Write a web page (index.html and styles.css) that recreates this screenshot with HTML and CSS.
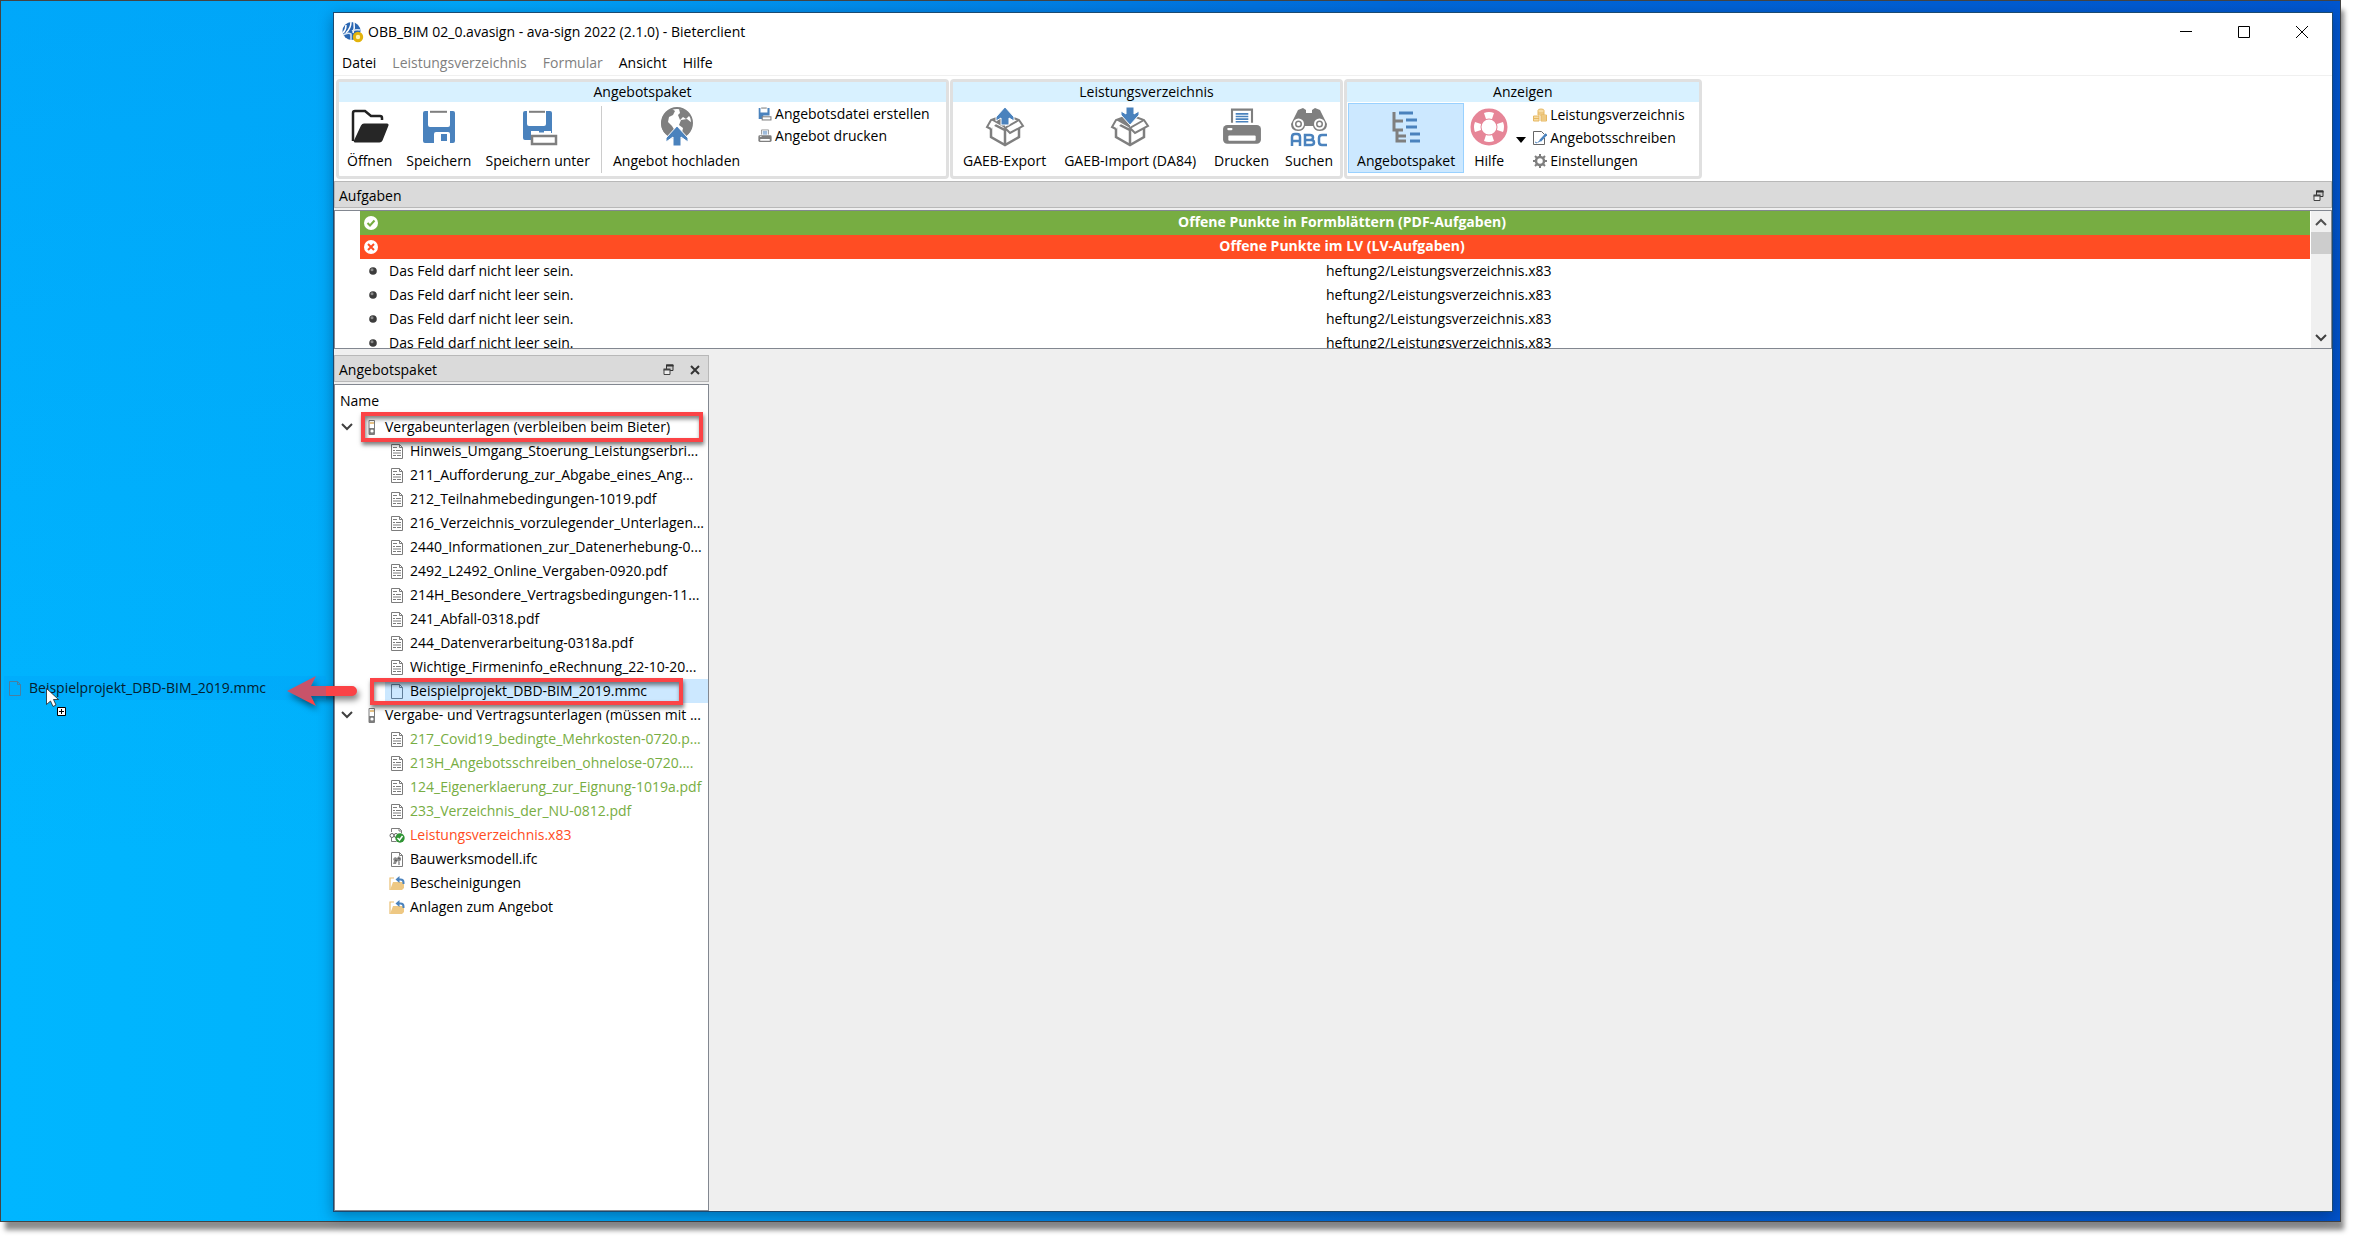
FILE: index.html
```html
<!DOCTYPE html>
<html lang="de">
<head>
<meta charset="utf-8">
<title>OBB_BIM 02_0.avasign - ava-sign 2022 (2.1.0) - Bieterclient</title>
<link rel="stylesheet" href="styles.css">
</head>
<body>
<svg class="sprite" aria-hidden="true">
  <symbol id="i-doc" viewBox="0 0 14 15"><path d="M1.500 .5h8l3 3v11h-11z" fill="#fff" stroke="#7c7c7c"/><path d="M9.500 .5v3h3" fill="none" stroke="#7c7c7c"/><path d="M3 3.500h4M3 6.500h2M6 6.500h5M3 9h8M3 11.500h3M7 11.500h4" stroke="#7c7c7c"/></symbol>
  <symbol id="i-blank" viewBox="0 0 14 15"><path d="M1.500 .5h8l3 3v11h-11z" fill="none" stroke="currentColor"/><path d="M9.500 .5v3h3" fill="none" stroke="currentColor"/></symbol>
  <symbol id="i-binder" viewBox="0 0 8 15"><path d="M1 .5h5.500v14h-5.500z" fill="#fff" stroke="#7c7c7c"/><path d="M2 3h4" stroke="#e3b25f" stroke-width="1.500"/><path d="M1 8h6v6H1z" fill="#7c7c7c"/><circle cx="4" cy="11" r="1.600" fill="#fff"/></symbol>
  <symbol id="i-lv" viewBox="0 0 16 16"><path d="M2.500 5V1.500h8l2 2V6M2.500 11v3.500h5" fill="none" stroke="#7c7c7c"/><path d="M10 1v3h3" fill="none" stroke="#7c7c7c"/><circle cx="3" cy="8.500" r="2" fill="none" stroke="#666"/><circle cx="7" cy="8.500" r="2" fill="none" stroke="#666"/><circle cx="11" cy="11" r="4.700" fill="#2f9434"/><path d="M8.500 11l2 2 3-4" fill="none" stroke="#fff" stroke-width="1.500"/></symbol>
  <symbol id="i-ifc" viewBox="0 0 14 15"><path d="M1.500 .5h8l3 3v11h-11z" fill="#fff" stroke="#7c7c7c"/><path d="M9.500 .5v3h3" fill="none" stroke="#7c7c7c"/><path d="M3 7l2-2 2 1 2-2 2 2v2l-2 2-2-1-1 3H3l1-3z" fill="#8c8c8c"/><path d="M5 8l2 1M8 6l2 1M9 10v3" stroke="#555"/></symbol>
  <symbol id="i-folderup" viewBox="0 0 16 15"><path d="M1 14V2h4" fill="none" stroke="#e9be72" stroke-width="1.200"/><path d="M1 14l3-8h11v6l-2 2z" fill="#eec883"/><path d="M8 3.500h3.500q3 0 3 3V8" fill="none" stroke="#4a82bd" stroke-width="2"/><path d="M10.500 0v7L6.500 3.500z" fill="#4a82bd"/></symbol>
  <symbol id="i-float" viewBox="0 0 11 12"><path d="M3.500 1h6.500v5.500h-6.500z" fill="#ccc" stroke="#333"/><path d="M3 1.500h7.500" stroke="#333" stroke-width="2"/><path d="M1 5.500h6v5H1z" fill="#eee" stroke="#444"/><path d="M.5 5.500H7.500" stroke="#444" stroke-width="2"/></symbol>
  <symbol id="i-close" viewBox="0 0 10 10"><path d="M1 1l8 8M9 1L1 9" stroke="#333" stroke-width="2"/></symbol>
  <symbol id="i-down" viewBox="0 0 12 8"><path d="M1 1l5 5 5-5" fill="none" stroke="#404040" stroke-width="2"/></symbol>
  <symbol id="i-up" viewBox="0 0 12 8"><path d="M1 7l5-5 5 5" fill="none" stroke="#505050" stroke-width="2"/></symbol>
  <symbol id="i-bullet" viewBox="0 0 8 8"><circle cx="4" cy="4" r="3.800" fill="#3c3c3c"/><circle cx="3" cy="2.800" r="1.500" fill="#8a8a8a"/></symbol>
  <symbol id="i-printer" viewBox="0 0 38 38"><path d="M9.500 15V2.500h19V15" fill="#fff" stroke="#7f7f7f" stroke-width="2"/><path d="M13 6.500h12M13 9h12M13 11.500h12M13 14h12" stroke="#4a82bd" stroke-width="1.500"/><rect x="1" y="17" width="36" height="18" rx="4" fill="#7f7f7f"/><rect x="5" y="20" width="5" height="2" rx="1" fill="#fff"/><rect x="6" y="27" width="26" height="5" rx="1" fill="#fff"/></symbol>
</svg>

<main class="desktop">
  <section class="window">
    <header class="titlebar">
      <svg width="22" height="22" viewBox="0 0 22 22"><circle cx="9.500" cy="10" r="9" fill="#2a66b2"/><path d="M9 1Q9 7 4 12M4 4q0 5-3 8M12 1q1 6-1 11" fill="none" stroke="#fff" stroke-width="1.500"/><path d="M1 14q5-3 8-1v6M10 10q4-2 8-1" fill="none" stroke="#d5e4f5" stroke-width="1.500"/><circle cx="16" cy="16" r="3.700" fill="#fff2b0" stroke="#e3b30c" stroke-width="3"/></svg>
      <h1>OBB_BIM 02_0.avasign - ava-sign 2022 (2.1.0) - Bieterclient</h1>
      <div class="winbtns">
        <button aria-label="Minimieren"><svg width="12" height="12"><path d="M0 5.500h12" stroke="#000"/></svg></button>
        <button aria-label="Maximieren"><svg width="12" height="12"><path d="M.5 .5h11v11H.5z" fill="none" stroke="#000"/></svg></button>
        <button aria-label="Schließen"><svg width="12" height="12"><path d="M0 0l12 12M12 0L0 12" stroke="#000"/></svg></button>
      </div>
    </header>
    <nav class="menubar">
      <button>Datei</button><button disabled>Leistungsverzeichnis</button><button disabled>Formular</button><button>Ansicht</button><button>Hilfe</button>
    </nav>

    <div class="toolbar">
      <section class="group group-package">
        <h2>Angebotspaket</h2>
        <div class="tools">
          <button class="tool"><svg width="40" height="40" viewBox="0 0 40 40"><path d="M3 34V6q0-2 2-2h10l6 5h9q2 0 2 2v2" fill="none" stroke="#222" stroke-width="2.500"/><path d="M6 35.500q-3 0-2-2l7-15q1-2 3-2h23q2 0 1.500 2l-6 15q-1 2-3 2z" fill="#262626"/></svg>Öffnen</button>
          <button class="tool"><svg width="40" height="40" viewBox="0 0 40 40"><path d="M4 6q0-2 2-2h3v14q0 2 2 2h18q2 0 2-2V4h3q2 0 2 2v28q0 2-2 2h-3V27q0-2-2-2H17q-2 0-2 2v9H6q-2 0-2-2z" fill="#4a82bd"/><path d="M11 4.800h17" stroke="#7f7f7f" stroke-width="2"/><path d="M22 27h6v7h-6z" fill="#4a82bd"/></svg>Speichern</button>
          <button class="tool"><svg width="40" height="40" viewBox="0 0 40 40"><path d="M5 6q0-2 2-2h2v13q0 2 2 2h15q2 0 2-2V4h4q2 0 2 2v20H17v-2h-4v9H7q-2 0-2-2z" fill="#4a82bd"/><path d="M11 4.800h16" stroke="#7f7f7f" stroke-width="2"/><path d="M13 24h20v3H13z" fill="#fff"/><path d="M21 24.500h5" stroke="#4a82bd" stroke-width="2"/><rect x="14" y="29" width="24" height="8" fill="#fff" stroke="#7f7f7f" stroke-width="2.500"/></svg>Speichern unter</button>
          <span class="sep"></span>
          <button class="tool"><svg width="40" height="40" viewBox="0 0 40 40"><circle cx="20" cy="16" r="15" fill="#fff" stroke="#7f7f7f" stroke-width="2"/><path d="M6 9q4-6 9-7l3 2-2 4-4 2-1 5 4 4 3 5-2 7Q4 27 4 16zM22 2q7 0 11 6l-4 4-3-2-3 3-2-5 2-2zM24 13l6-1 5 4q0 9-7 14l-3-4 1-5-4-3z" fill="#7f7f7f"/><path d="M20 19l11 12v4l-7-5v9h-8v-9l-7 5v-4z" fill="#4a82bd" stroke="#fff"/></svg>Angebot hochladen</button>
          <div class="smalls">
            <button class="small"><svg width="14" height="14" viewBox="0 0 40 40"><path d="M2 3h5v13h20V3h6v21H15v10H2z" fill="#4a82bd"/><path d="M9 3h16" stroke="#7f7f7f" stroke-width="3"/><rect x="12" y="28" width="25" height="9" fill="#fff" stroke="#7f7f7f" stroke-width="3"/></svg>Angebotsdatei erstellen</button>
            <button class="small"><svg width="14" height="14"><use href="#i-printer"/></svg>Angebot drucken</button>
          </div>
        </div>
      </section>

      <section class="group group-lv">
        <h2>Leistungsverzeichnis</h2>
        <div class="tools">
          <button class="tool"><svg width="40" height="40" viewBox="0 0 40 40"><path d="M6 16l14 7 14-7v14l-14 8-14-8zM20 23v15" fill="#fff" stroke="#7f7f7f" stroke-width="2.500"/><path d="M20 8L6 13l-4 7 4 2M20 8l14 5 4 6-13 7-5-5 14-8" fill="#fff" stroke="#7f7f7f" stroke-width="2"/><path d="M6 13l14-5v13z" fill="#7f7f7f"/><path d="M20 0l9 10v4l-5-3v7h-8v-7l-5 3v-4z" fill="#4a82bd" stroke="#fff"/></svg>GAEB-Export</button>
          <button class="tool"><svg width="40" height="40" viewBox="0 0 40 40"><path d="M6 16l14 7 14-7v14l-14 8-14-8zM20 23v15" fill="#fff" stroke="#7f7f7f" stroke-width="2.500"/><path d="M20 8L6 13l-4 7 4 2M20 8l14 5 4 6-13 7-5-5 14-8" fill="#fff" stroke="#7f7f7f" stroke-width="2"/><path d="M6 13l14-5v13z" fill="#7f7f7f"/><path d="M20 18l9-10V4l-5 3V0h-8v7l-5-3v4z" fill="#4a82bd" stroke="#fff"/></svg>GAEB-Import (DA84)</button>
          <button class="tool"><svg width="40" height="40"><use href="#i-printer"/></svg>Drucken</button>
          <button class="tool"><svg width="40" height="40" viewBox="0 0 40 40"><path d="M9 3l5-2 3 2v3h6V3l3-2 5 2 7 14q0 7-7 7-6 0-7-5h-8q-1 5-7 5-7 0-7-7z" fill="#7f7f7f"/><circle cx="9.500" cy="17" r="4.500" fill="none" stroke="#fff" stroke-width="2"/><circle cx="30.500" cy="17" r="4.500" fill="none" stroke="#fff" stroke-width="2"/><circle cx="9.500" cy="17" r="2" fill="#fff"/><circle cx="30.500" cy="17" r="2" fill="#fff"/><path d="M3 39V30q0-3 3-3h2q3 0 3 3v9M3 34h8M16 28h5q3 0 3 2.500T21 33h-5 6q3 0 3 2.500T22 38h-6zM38 28h-5q-3 0-3 3v4q0 3 3 3h5" fill="none" stroke="#4a82bd" stroke-width="2.500"/></svg>Suchen</button>
        </div>
      </section>

      <section class="group group-view">
        <h2>Anzeigen</h2>
        <div class="tools">
          <button class="tool active"><svg width="40" height="40" viewBox="0 0 40 40"><path d="M8 5v18h9M8 14h9M11 23v11h9M11 29h9" fill="none" stroke="#7f7f7f" stroke-width="3"/><path d="M13 6h14M20 13h11M20 20h11M24 27h10M24 34h10" stroke="#4a82bd" stroke-width="3"/></svg>Angebotspaket</button>
          <button class="tool help"><svg width="40" height="40" viewBox="0 0 40 40"><circle cx="20" cy="20" r="13" fill="none" stroke="#e68597" stroke-width="11"/><path d="M15 6q5-2 10 0l-2 6q-3-1-6 0zM15 34q5 2 10 0l-2-6q-3 1-6 0zM6 15q-2 5 0 10l6-2q-1-3 0-6zM34 15q2 5 0 10l-6-2q1-3 0-6z" fill="#fff"/></svg>Hilfe</button>
          <button class="drop" aria-label="Hilfe-Optionen"><svg width="10" height="6"><path d="M0 0h10L5 6z"/></svg></button>
          <div class="smalls three">
            <button class="small"><svg width="14" height="14" viewBox="0 0 14 14"><g fill="#f7dca4" stroke="#e6b862"><ellipse cx="8" cy="2.500" rx="3" ry="1.500"/><path d="M5 3v4h6V3M5 5h6"/><path d="M.5 8h5.500v5H.5zM.5 10.500H6M8 7h5.500v6H8zM8 9h5.500M8 11h5.500"/></g></svg>Leistungsverzeichnis</button>
            <button class="small"><svg width="14" height="14" viewBox="0 0 14 14"><path d="M11.500 7v6.500H.5V.5h8l3 3" fill="#fff" stroke="#666"/><path d="M13.500 3L7 10" stroke="#4a82bd" stroke-width="2.500"/><path d="M7 10l-2.500 1.500M2 11l2 1" stroke="#4a82bd" fill="none"/></svg>Angebotsschreiben</button>
            <button class="small"><svg width="14" height="14" viewBox="0 0 14 14"><circle cx="7" cy="7" r="4" fill="none" stroke="#7f7f7f" stroke-width="2.500"/><path d="M7 0v3M7 11v3M0 7h3M11 7h3M2 2l2 2M10 10l2 2M12 2l-2 2M4 10l-2 2" stroke="#7f7f7f" stroke-width="2"/></svg>Einstellungen</button>
          </div>
        </div>
      </section>
    </div>

    <section class="tasks">
      <header class="dockbar"><h2>Aufgaben</h2><button aria-label="Abdocken"><svg width="11" height="12"><use href="#i-float"/></svg></button></header>
      <div class="taskbox">
        <div class="tasklist">
          <table>
            <colgroup><col class="col-message"><col></colgroup>
            <tbody>
              <tr class="ok"><th colspan="2"><svg width="14" height="14" viewBox="0 0 14 14"><circle cx="7" cy="7" r="7" fill="#fff"/><path d="M3.500 7l2.500 2.500 4.500-5" fill="none" stroke="#77ad42" stroke-width="2"/></svg>Offene Punkte in Formblättern (PDF-Aufgaben)</th></tr>
              <tr class="bad"><th colspan="2"><svg width="14" height="14" viewBox="0 0 14 14"><circle cx="7" cy="7" r="7" fill="#fff"/><path d="M4 4l6 6M10 4l-6 6" stroke="#ff4d23" stroke-width="2"/></svg>Offene Punkte im LV (LV-Aufgaben)</th></tr>
              <tr><td><svg width="8" height="8"><use href="#i-bullet"/></svg>Das Feld darf nicht leer sein.</td><td>heftung2/Leistungsverzeichnis.x83</td></tr>
              <tr><td><svg width="8" height="8"><use href="#i-bullet"/></svg>Das Feld darf nicht leer sein.</td><td>heftung2/Leistungsverzeichnis.x83</td></tr>
              <tr><td><svg width="8" height="8"><use href="#i-bullet"/></svg>Das Feld darf nicht leer sein.</td><td>heftung2/Leistungsverzeichnis.x83</td></tr>
              <tr><td><svg width="8" height="8"><use href="#i-bullet"/></svg>Das Feld darf nicht leer sein.</td><td>heftung2/Leistungsverzeichnis.x83</td></tr>
            </tbody>
          </table>
        </div>
        <div class="scrollbar">
          <button aria-label="Nach oben"><svg width="12" height="8"><use href="#i-up"/></svg></button>
          <span class="thumb"></span>
          <button aria-label="Nach unten"><svg width="12" height="8"><use href="#i-down"/></svg></button>
        </div>
      </div>
    </section>

    <aside class="package">
      <header class="dockbar"><h2>Angebotspaket</h2><button aria-label="Abdocken"><svg width="11" height="12"><use href="#i-float"/></svg></button><button aria-label="Schließen"><svg width="10" height="10"><use href="#i-close"/></svg></button></header>
      <div class="treebox">
        <h3>Name</h3>
        <ul class="tree">
          <li>
            <div class="branch"><svg class="chev" width="12" height="8"><use href="#i-down"/></svg><svg class="binder" width="8" height="15"><use href="#i-binder"/></svg>Vergabeunterlagen (verbleiben beim Bieter)<span class="mark mark-branch"></span></div>
            <ul>
              <li class="leaf"><svg width="14" height="15"><use href="#i-doc"/></svg>Hinweis_Umgang_Stoerung_Leistungserbri...</li>
              <li class="leaf"><svg width="14" height="15"><use href="#i-doc"/></svg>211_Aufforderung_zur_Abgabe_eines_Ang...</li>
              <li class="leaf"><svg width="14" height="15"><use href="#i-doc"/></svg>212_Teilnahmebedingungen-1019.pdf</li>
              <li class="leaf"><svg width="14" height="15"><use href="#i-doc"/></svg>216_Verzeichnis_vorzulegender_Unterlagen...</li>
              <li class="leaf"><svg width="14" height="15"><use href="#i-doc"/></svg>2440_Informationen_zur_Datenerhebung-0...</li>
              <li class="leaf"><svg width="14" height="15"><use href="#i-doc"/></svg>2492_L2492_Online_Vergaben-0920.pdf</li>
              <li class="leaf"><svg width="14" height="15"><use href="#i-doc"/></svg>214H_Besondere_Vertragsbedingungen-11...</li>
              <li class="leaf"><svg width="14" height="15"><use href="#i-doc"/></svg>241_Abfall-0318.pdf</li>
              <li class="leaf"><svg width="14" height="15"><use href="#i-doc"/></svg>244_Datenverarbeitung-0318a.pdf</li>
              <li class="leaf"><svg width="14" height="15"><use href="#i-doc"/></svg>Wichtige_Firmeninfo_eRechnung_22-10-20...</li>
              <li class="leaf selected"><svg width="14" height="15"><use href="#i-blank"/></svg>Beispielprojekt_DBD-BIM_2019.mmc<span class="mark mark-leaf"></span>
                <svg class="arrow" width="76" height="38" viewBox="0 0 76 38"><path d="M1 18L30 3l-5 10h41a5 5 0 0 1 0 10H25l5 10z" fill="#fb4346"/></svg>
              </li>
            </ul>
          </li>
          <li>
            <div class="branch"><svg class="chev" width="12" height="8"><use href="#i-down"/></svg><svg class="binder" width="8" height="15"><use href="#i-binder"/></svg>Vergabe- und Vertragsunterlagen (müssen mit ...</div>
            <ul>
              <li class="leaf done"><svg width="14" height="15"><use href="#i-doc"/></svg>217_Covid19_bedingte_Mehrkosten-0720.p...</li>
              <li class="leaf done"><svg width="14" height="15"><use href="#i-doc"/></svg>213H_Angebotsschreiben_ohnelose-0720....</li>
              <li class="leaf done"><svg width="14" height="15"><use href="#i-doc"/></svg>124_Eigenerklaerung_zur_Eignung-1019a.pdf</li>
              <li class="leaf done"><svg width="14" height="15"><use href="#i-doc"/></svg>233_Verzeichnis_der_NU-0812.pdf</li>
              <li class="leaf open"><svg width="16" height="16"><use href="#i-lv"/></svg>Leistungsverzeichnis.x83</li>
              <li class="leaf"><svg width="14" height="15"><use href="#i-ifc"/></svg>Bauwerksmodell.ifc</li>
              <li class="leaf"><svg width="16" height="15"><use href="#i-folderup"/></svg>Bescheinigungen</li>
              <li class="leaf"><svg width="16" height="15"><use href="#i-folderup"/></svg>Anlagen zum Angebot</li>
            </ul>
          </li>
        </ul>
      </div>
    </aside>
  </section>

  <div class="dragged"><svg width="14" height="15"><use href="#i-blank"/></svg>Beispielprojekt_DBD-BIM_2019.mmc
    <svg class="cursor" width="22" height="30" viewBox="0 0 22 30"><path d="M1.500 1.500v16l4-3.500 2.500 5.500 3-1.500-2.500-5.500h5z" fill="#fff" stroke="#222" stroke-width=".8"/><path d="M12.500 20.500h8v8h-8z" fill="#fff" stroke="#000"/><path d="M14 24.500h5M16.500 22v5" stroke="#000"/></svg>
  </div>
</main>
</body>
</html>
```

FILE: styles.css
```css
* {
  box-sizing: border-box;
}

body {
  margin: 0;
  height: 100vh;
  padding: 0 15px 15px 0;
  background: #fff;
  color: #000;
  font: 14px/24px "Open Sans", "Noto Sans", sans-serif;
  overflow: hidden;
}

h1, h2, h3, ul {
  margin: 0;
  padding: 0;
  font-size: 14px;
  font-weight: 400;
  list-style: none;
}

button {
  margin: 0;
  padding: 0;
  border: 0;
  background: none;
  color: inherit;
  font: inherit;
  white-space: nowrap;
}

svg {
  flex: none;
}

.sprite {
  position: absolute;
  width: 0;
  height: 0;
}

/* Desktop */
.desktop {
  position: relative;
  display: flex;
  height: 100%;
  padding: 11px 7px 9px 332px;
  border: 1px solid #444;
  background:
    linear-gradient(168deg, transparent 86%, rgba(0, 120, 230, .06) 86%),
    linear-gradient(180deg, rgba(0, 110, 230, .2), transparent 70%),
    linear-gradient(90deg, #00b6ff, #00b2fb 20%, #0067d6 60%, #0050c8);
  box-shadow: 4px 9px 5px -1px rgba(0, 0, 0, .45);
}

.window {
  flex: 1;
  min-width: 0;
  display: flex;
  flex-direction: column;
  border: 1px solid #1c4a70;
  background: #efefef;
  box-shadow: 0 4px 14px rgba(0, 30, 70, .4);
}

/* Title and menu */
.titlebar {
  display: flex;
  align-items: center;
  height: 37px;
  padding: 0 1px 0 8px;
  gap: 4px;
  background: #fff;
}

.winbtns {
  display: flex;
  margin-left: auto;
}

.winbtns button {
  width: 58px;
  display: flex;
  justify-content: center;
}

.menubar {
  display: flex;
  height: 26px;
  padding: 1px 0 0 8px;
  gap: 16px;
  border-bottom: 1px solid #f0f0f0;
  background: #fff;
}

.menubar button:disabled {
  color: #7f7f7f;
}

/* Ribbon */
.toolbar {
  display: flex;
  gap: 1px;
  height: 105px;
  padding: 3px 2px 2px;
  background: #fff;
}

.group {
  display: flex;
  flex-direction: column;
  border: 3px solid #e0e0e0;
  border-radius: 4px;
}

.group h2 {
  height: 20px;
  line-height: 20px;
  background: #d8f1ff;
  text-align: center;
}

.tools {
  flex: 1;
  display: flex;
  padding: 1px 0 0 1px;
}

.tool {
  display: flex;
  flex-direction: column;
  align-items: center;
  gap: 2px;
  height: 70px;
  padding: 4px 7px 0;
}

.group-package {
  min-width: 613px;
}

.group-lv .tool {
  padding: 4px 9px 0;
}

.group-lv .tool:last-child {
  padding: 4px 7px 0;
}

.tool.active {
  padding: 3px 8px 0;
  border: 1px solid #99d1ff;
  background: #cce8ff;
}

.tool.help {
  padding: 4px 5px 0;
}

.sep {
  width: 1px;
  margin: 3px 4px;
  background: #ccc;
}

.drop {
  width: 14px;
  height: 70px;
}

.smalls {
  display: flex;
  flex-direction: column;
  padding: 0 12px 0 11px;
}

.smalls.three {
  padding: 0 14px 0 5px;
}

.small {
  display: flex;
  align-items: center;
  gap: 3px;
  height: 22px;
}

.smalls.three .small {
  height: 23px;
}

/* Docks */
.dockbar {
  display: flex;
  align-items: center;
  height: 27px;
  padding: 2px 8px 0 4px;
  border: 1px solid #b8b8b8;
  background: #dadada;
}

.tasks .dockbar {
  padding-right: 7px;
}

.dockbar h2 {
  flex: 1;
}

.dockbar button {
  display: flex;
}

.dockbar button + button {
  margin-left: 16px;
}

.taskbox {
  display: flex;
  height: 139px;
  margin-top: 2px;
  border: 1px solid #828790;
  background: #fff;
}

.tasklist {
  flex: 1;
  height: 137px;
  padding: 0 1px 0 25px;
  overflow: hidden;
}

.tasklist table {
  width: 100%;
  table-layout: fixed;
  border-collapse: collapse;
}

.col-message {
  width: 966px;
}

.tasklist td {
  height: 24px;
  padding: 0 0 0 6px;
}

.tasklist td + td {
  padding: 0;
}

.tasklist th {
  height: 24px;
  padding: 0 4px 2px;
  color: #fff;
  font-weight: 700;
  line-height: 22px;
}

.tasklist th svg {
  float: left;
  margin-top: 5px;
}

.tasklist td svg {
  margin: 0 12px 2px 3px;
  vertical-align: middle;
}

.ok {
  background: #77ad42;
}

.bad {
  background: #ff4d23;
}

.scrollbar {
  display: flex;
  flex-direction: column;
  width: 20px;
  background: #f0f0f0;
}

.scrollbar button {
  display: flex;
  align-items: center;
  justify-content: center;
  height: 21px;
}

.scrollbar .thumb {
  height: 22px;
  margin-bottom: auto;
  background: #cdcdcd;
}

.package {
  flex: 1;
  display: flex;
  flex-direction: column;
  width: 375px;
  margin-top: 6px;
}

.treebox {
  flex: 1;
  margin-top: 2px;
  border: 1px solid #828790;
  background: #fff;
}

.treebox h3 {
  height: 30px;
  padding-left: 5px;
  line-height: 32px;
}

.branch,
.leaf {
  position: relative;
  display: flex;
  align-items: center;
  height: 24px;
  white-space: nowrap;
}

.chev {
  margin: 0 15px 0 6px;
}

.binder {
  margin-right: 9px;
}

.leaf {
  margin-left: 50px;
  padding-left: 4px;
}

.leaf > svg:first-child {
  width: 16px;
  margin-right: 5px;
}

.selected {
  background: #cce8ff;
}

.selected > svg:first-child {
  color: #5f7d99;
}

.done {
  color: #77ad42;
}

.open {
  color: #ff4d23;
}

/* Annotations over the tree and desktop */
.mark {
  position: absolute;
  border: 4px solid #fb4346;
  box-shadow: 1px 3px 4px rgba(0, 0, 0, .5), inset 1px 3px 4px rgba(0, 0, 0, .5);
  z-index: 1;
}

.mark-branch {
  inset: -3px 5px -3px 26px;
}

.mark-leaf {
  inset: -1px 25px -2px -15px;
}

.arrow {
  position: absolute;
  top: -6px;
  left: -99px;
  filter: drop-shadow(2px 4px 3px rgba(0, 0, 0, .5));
}

.dragged {
  position: absolute;
  top: 675px;
  left: 3px;
  display: flex;
  align-items: center;
  gap: 7px;
  width: 322px;
  height: 24px;
  padding-left: 4px;
  background: rgba(0, 150, 245, .2);
  color: #04202f;
}

.dragged > svg:first-child {
  color: #4a7fa0;
}

.cursor {
  position: absolute;
  top: 11px;
  left: 41px;
}
```
